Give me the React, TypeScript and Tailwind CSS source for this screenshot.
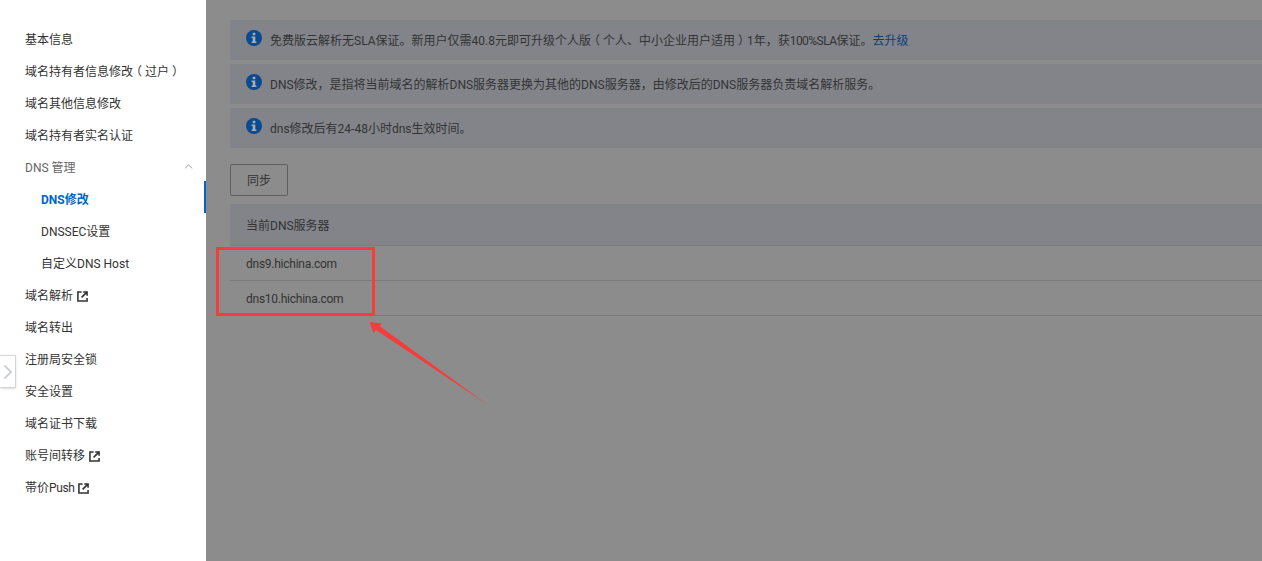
import { ChevronRight, ChevronUp } from "lucide-react";

const font = { fontFamily: 'Roboto, "Noto Sans CJK SC", sans-serif' };

const ExternalIcon = () => (
  <svg width="11" height="11" viewBox="0 0 12 12" fill="none" className="ml-1 shrink-0">
    <path d="M5 1H1V11H11V7.5" stroke="#333" strokeWidth="1.7" />
    <path d="M5 7L10.5 1.5M6.8 1H11V5.2" stroke="#333" strokeWidth="1.7" />
  </svg>
);

const InfoIcon = () => (
  <svg width="16" height="16" viewBox="0 0 16 16" className="shrink-0">
    <circle cx="8" cy="8" r="8" fill="#0b4a8e" />
    <rect x="6.7" y="2.8" width="2.6" height="2.4" fill="#a9acb3" />
    <path d="M5.6 6.4H9.3V11.4H10.4V13H5.6V11.4H6.7V8H5.6Z" fill="#a9acb3" />
  </svg>
);

// full-width brackets sit in the middle of their cell in the reference
const Bracket = ({ children }: { children: React.ReactNode }) => (
  <span className="px-[3px] [font-feature-settings:'halt']">{children}</span>
);

const MenuItem = ({ text, sub, external, active }: { text: React.ReactNode; sub?: boolean; external?: boolean; active?: boolean }) => (
  <div
    className={`flex h-8 items-center whitespace-nowrap pt-[6px] text-xs ${sub ? "pl-[41px]" : "pl-[25px]"} ${active ? "border-r-[2px] border-[#0064c8] font-bold text-[#0064c8]" : "text-[#333]"}`}
  >
    <span>{text}</span>
    {external && <ExternalIcon />}
  </div>
);

const Notice = ({ children }: { children: React.ReactNode }) => (
  <div className="flex h-10 gap-2 bg-[#82848a] pl-4 pt-[10px]">
    <InfoIcon />
    <div className="pt-[2px] text-xs leading-[18px] text-[#333]">{children}</div>
  </div>
);

export default function App() {
  return (
    <div className="relative flex h-[561px] w-[1262px] overflow-hidden bg-[#8c8c8c]" style={font}>
      {/* left side */}
      <div className="w-[206px] shrink-0 bg-white pt-[21px]">
        <MenuItem text="基本信息" />
        <MenuItem text={<>域名持有者信息修改<Bracket>（</Bracket>过户<Bracket>）</Bracket></>} />
        <MenuItem text="域名其他信息修改" />
        <MenuItem text="域名持有者实名认证" />
        <div className="flex h-8 items-center justify-between pl-[25px] pr-[11px] pt-[6px] text-xs text-[#666]">
          DNS 管理
          <ChevronUp size={13} strokeWidth={1.3} color="#777" className="-mt-1" />
        </div>
        <MenuItem text="DNS修改" sub active />
        <MenuItem text="DNSSEC设置" sub />
        <MenuItem text="自定义DNS Host" sub />
        <MenuItem text="域名解析" external />
        <MenuItem text="域名转出" />
        <MenuItem text="注册局安全锁" />
        <MenuItem text="安全设置" />
        <MenuItem text="域名证书下载" />
        <MenuItem text="账号间转移" external />
        <MenuItem text={<>帯价<span className="tracking-[-0.4px]">Push</span></>} external />
      </div>

      {/* right side */}
      <div className="flex-1 pl-6 pt-5">
        <div className="flex flex-col gap-1">
          <Notice>
            免费版云解析无SLA保证。新用户仅需40.8元即可升级个人版<Bracket>（</Bracket>个人、中小企业用户适用<Bracket>）</Bracket>1年，获<span className="tracking-[-0.55px]">100%SLA</span>保证。
            <span className="text-[#0c3f78]">去升级</span>
          </Notice>
          <Notice>DNS修改，是指将当前域名的解析DNS服务器更换为其他的DNS服务器，由修改后的DNS服务器负责域名解析服务。</Notice>
          <Notice>dns修改后有24-48小时dns生效时间。</Notice>
        </div>
        <button className="mt-4 h-8 w-[58px] rounded-[2px] border border-[#5f5f5f] pt-[2px] text-xs text-[#333]">同步</button>
        <div className="mt-2 flex h-[42px] items-center border-b border-[#7a7a7a] bg-[#82848a] pl-4 pt-[2px] text-xs text-[#333]">
          当前DNS服务器
        </div>
        <div className="flex h-[35px] items-center border-b border-[#7a7a7a] pl-4 pt-[2px] text-xs tracking-[-0.25px] text-[#333]">dns9.hichina.com</div>
        <div className="flex h-[35px] items-center border-b border-[#7a7a7a] pl-4 pt-[2px] text-xs tracking-[-0.25px] text-[#333]">dns10.hichina.com</div>
      </div>

      {/* collapse tab */}
      <div className="absolute left-0 top-[355px] flex h-[33px] w-[16px] items-center justify-center border border-l-0 border-[#d5d5d5] bg-white shadow-sm">
        <ChevronRight size={24} strokeWidth={1.8} color="#ccd0d4" className="shrink-0" />
      </div>

      {/* annotation */}
      <div className="absolute left-[216px] top-[247px] h-[69px] w-[159px] border-[3px] border-[#f73c3c]" />
      <svg className="absolute left-[365px] top-[315px]" width="130" height="95" viewBox="0 0 130 95">
        <path d="M4.5 7L17 8.5L14.5 11L123 90L11 15L8.5 18Z" fill="#f73c3c" />
      </svg>
    </div>
  );
}
